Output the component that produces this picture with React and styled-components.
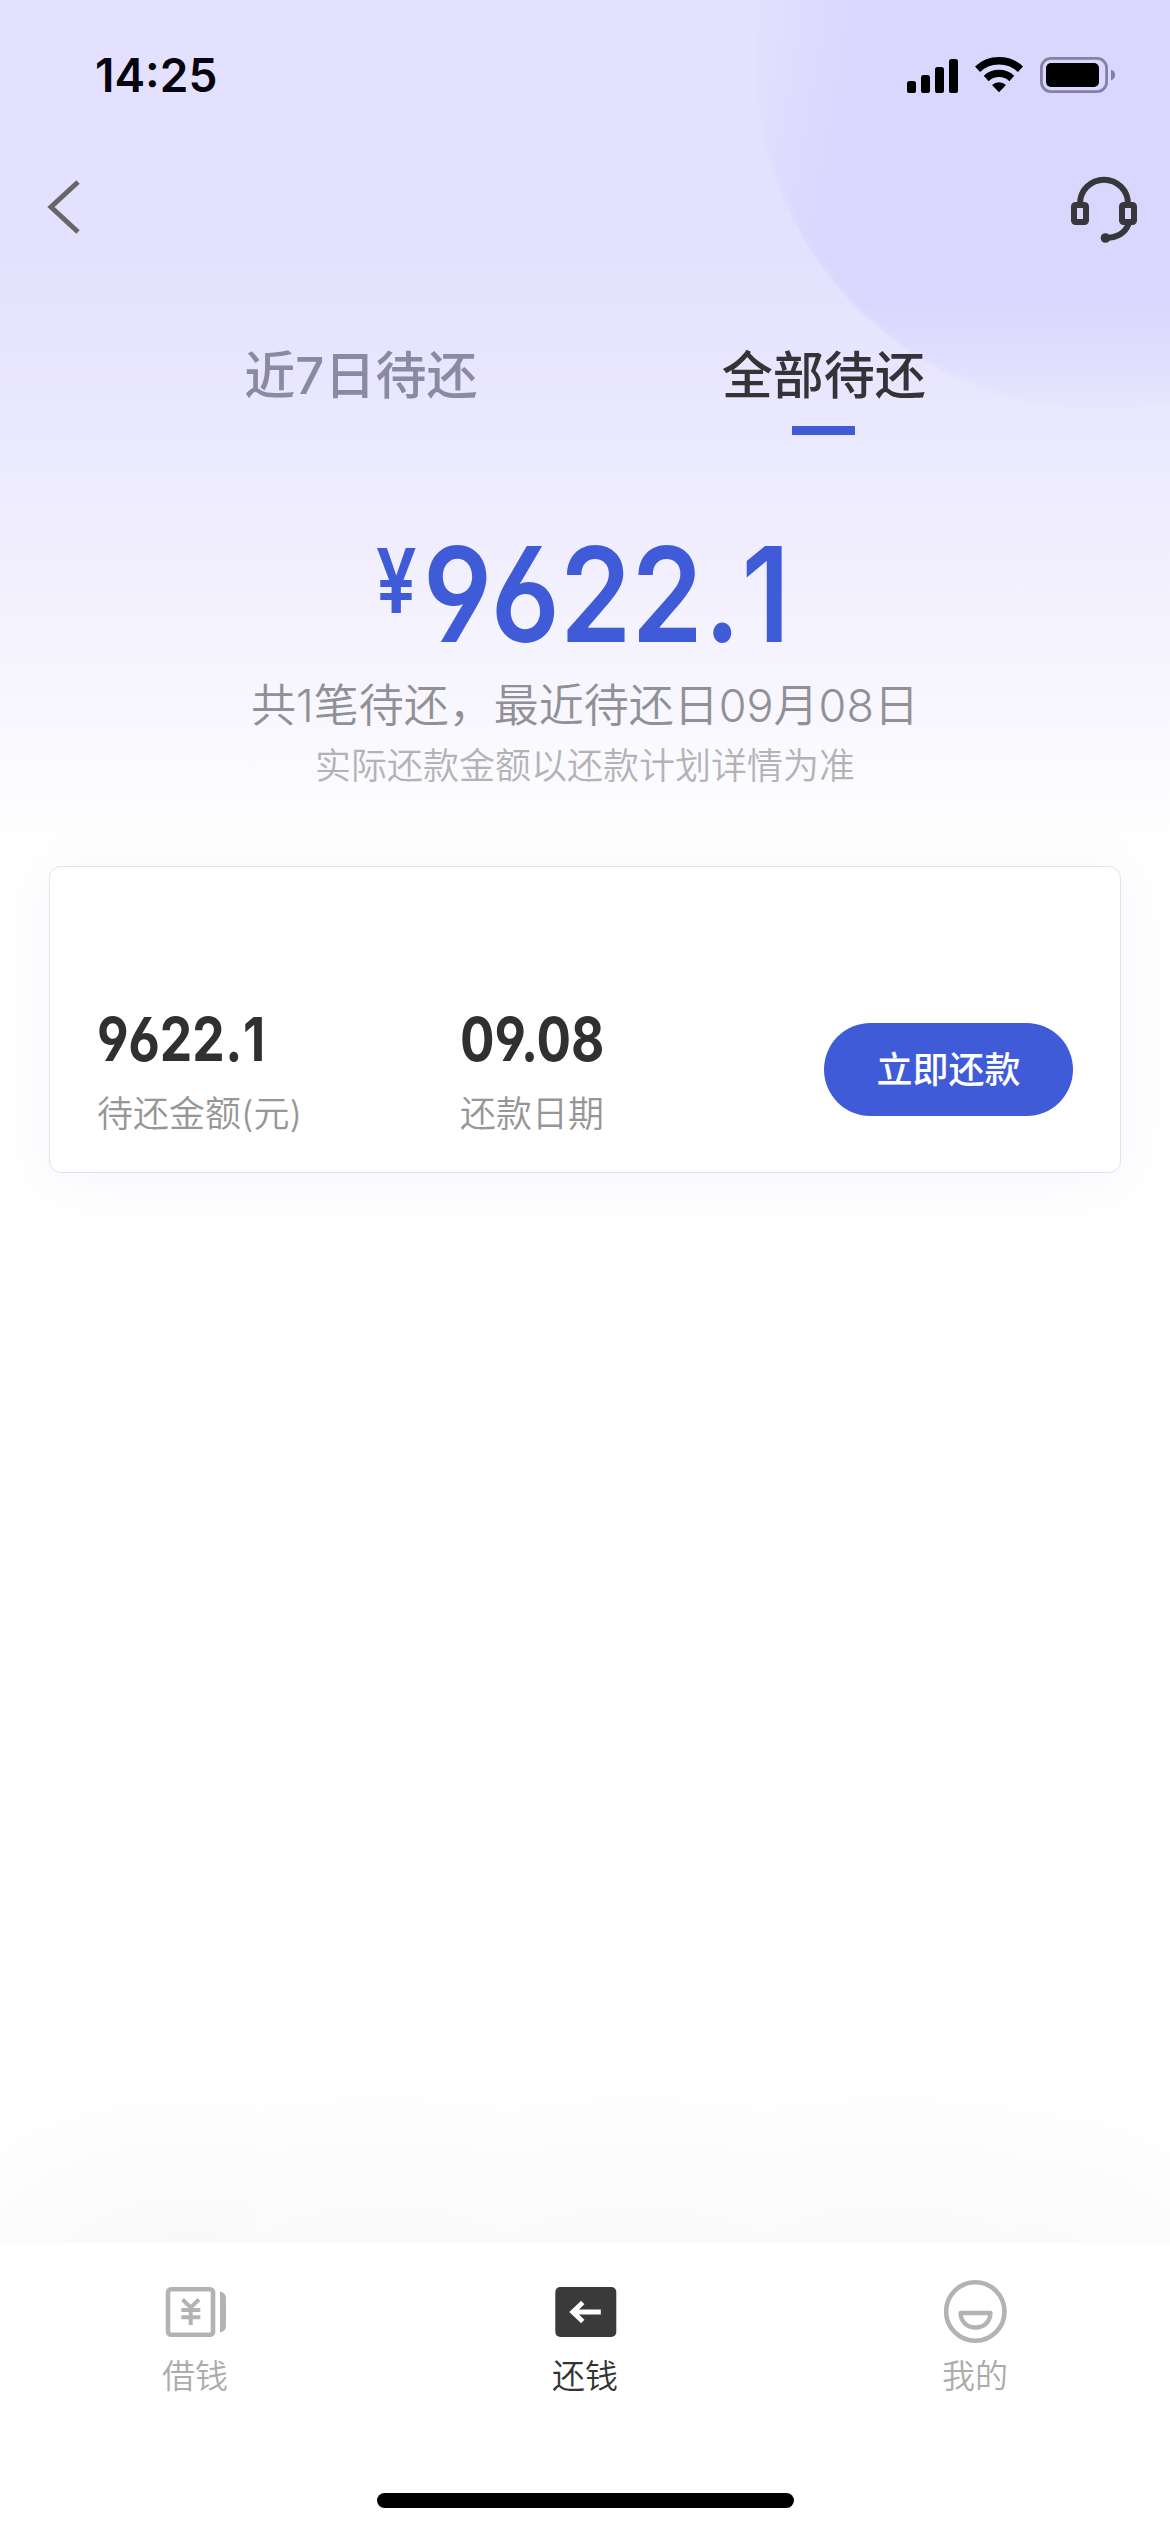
import React, { useState } from "react";
import styled, { createGlobalStyle } from "styled-components";

const GlobalStyle = createGlobalStyle`
  * {
    box-sizing: border-box;
  }
  body {
    margin: 0;
    background: #fff;
    font-family: "Inter", "Noto Sans CJK SC", sans-serif;
  }
`;

const Page = styled.div`
  position: relative;
  display: flex;
  flex-direction: column;
  width: 1170px;
  height: 2532px;
  overflow: hidden;
  background: linear-gradient(
    #e4e1fe 0,
    #e4e1fe 250px,
    #ebe9fe 440px,
    #f0eefe 540px,
    #f6f5fe 670px,
    #ffffff 850px
  );
`;

const Glow = styled.div`
  position: absolute;
  left: 756px;
  top: -282px;
  width: 692px;
  height: 692px;
  border-radius: 50%;
  background: #dad7fe;
  filter: blur(3px);
  mask-image: linear-gradient(100deg, transparent 5%, #000 19%),
    linear-gradient(#000 85%, transparent 101%);
  mask-composite: intersect;
`;

const StatusBar = styled.div`
  position: relative;
  display: flex;
  align-items: center;
  justify-content: space-between;
  height: 149px;
  padding: 0 54px 0 95px;
`;

const Time = styled.span`
  font-size: 46px;
  font-weight: 600;
  line-height: 56px;
  color: #05040f;
`;

const StatusIcons = styled.div`
  display: flex;
  align-items: center;
  gap: 17px;
`;

const NavBar = styled.div`
  position: relative;
  display: flex;
  align-items: center;
  justify-content: space-between;
  height: 116px;
  padding: 0 30px 0 46px;
`;

const Tabs = styled.div`
  position: relative;
  display: flex;
  justify-content: space-evenly;
  margin-top: 80px;
`;

const Tab = styled.div`
  display: flex;
  flex-direction: column;
  align-items: center;
  gap: 20px;
  height: 90px;
  font-size: 51px;
  font-weight: 500;
  line-height: 61px;
  color: ${(p) => (p.$active ? "#333338" : "#8c8aa3")};
`;

const TabLine = styled.div`
  width: 63px;
  height: 9px;
  background: #415bd4;
`;

const Summary = styled.div`
  display: flex;
  flex-direction: column;
  align-items: center;
`;

const Amount = styled.div`
  display: flex;
  width: 418px;
  height: 100px;
  margin-top: 109px;
  color: #3f5bd8;
`;

// narrow numerals with straight-legged 6 and 9
const Num = styled.span`
  display: block;
  flex: none;
  width: ${(p) => p.$width}px;
  height: ${(p) => p.$line}px;
  font-size: ${(p) => p.$size}px;
  line-height: ${(p) => p.$line}px;
  font-weight: ${(p) => p.$weight || 600};
  font-feature-settings: "ss01";
  white-space: nowrap;
  transform: scaleX(${(p) => p.$scale});
  transform-origin: left center;
`;

const Dot = styled.span`
  margin: 0 0.01em;
`;

const SummaryText = styled.div`
  margin-top: 32px;
  font-size: 45px;
  font-weight: 350;
  line-height: 60px;
  color: #919096;
`;

const SummaryHint = styled.div`
  margin-top: 5px;
  font-size: 36px;
  font-weight: 350;
  line-height: 50px;
  color: #b3b3b7;
`;

const Card = styled.div`
  display: flex;
  height: 307px;
  margin: 75px 49px 0;
  padding: 147px 47px 0;
  border: 1px solid #e2e2e8;
  border-radius: 12px;
  background: #fff;
  box-shadow: 0 6px 60px rgba(80, 90, 200, 0.06);
`;

const Field = styled.div`
  display: flex;
  flex-direction: column;
  gap: 25px;
  width: ${(p) => p.$width}px;
  color: #303030;
`;

const FieldLabel = styled.span`
  font-size: 36px;
  font-weight: 350;
  line-height: 50px;
  color: #969696;
`;

const PayButton = styled.button`
  width: 249px;
  height: 93px;
  margin: 9px 0 0 auto;
  padding: 0;
  border: none;
  border-radius: 47px;
  background: #3f5bd8;
  color: #fff;
  font-family: inherit;
  font-size: 36px;
  font-weight: 500;
  line-height: 50px;
`;

const TabBar = styled.div`
  display: flex;
  flex-direction: column;
  align-items: center;
  justify-content: space-between;
  height: 289px;
  margin-top: auto;
  padding: 33px 0 24px;
  background: #fff;
  box-shadow: 0 0 270px rgba(0, 0, 0, 0.065);
`;

const TabBarRow = styled.div`
  display: grid;
  grid-template-columns: repeat(3, 1fr);
  width: 100%;
`;

const TabBarItem = styled.div`
  display: flex;
  flex-direction: column;
  align-items: center;
  gap: 8px;
  font-size: 33px;
  font-weight: 350;
  line-height: 40px;
  color: ${(p) => (p.$active ? "#333333" : "#acacac")};
`;

const HomeIndicator = styled.div`
  width: 417px;
  height: 15px;
  border-radius: 8px;
  background: #000;
`;

const SignalIcon = () => (
  <svg width="51" height="36" viewBox="0 0 51 36">
    <rect x="0" y="24" width="9" height="12" rx="2.6" />
    <rect x="14" y="18" width="9" height="18" rx="2.6" />
    <rect x="28" y="10" width="9" height="26" rx="2.6" />
    <rect x="42" y="2" width="9" height="34" rx="2.6" />
  </svg>
);

const WifiIcon = () => (
  <svg width="48" height="37" viewBox="0 0 48 37">
    <g fill="none" stroke="#000">
      <path d="M2.5 13.3A31.5 31.5 0 0 1 45.5 13.3" strokeWidth="7.6" />
      <path d="M11.2 22.5A18.8 18.8 0 0 1 36.8 22.5" strokeWidth="7.2" />
    </g>
    <path d="M24 36.3L17 29A10.3 10.3 0 0 1 31 29Z" />
  </svg>
);

const BatteryIcon = () => (
  <svg width="76" height="36" viewBox="0 0 76 36">
    <rect
      x="1.4"
      y="1.4"
      width="65.2"
      height="33.2"
      rx="9.5"
      fill="none"
      stroke="#8680a4"
      strokeWidth="2.8"
    />
    <rect x="6" y="6" width="53" height="24" rx="5" />
    <path d="M71 12.5C76.5 14.5 76.5 21.5 71 23.5Z" fill="#8680a4" />
  </svg>
);

const BackIcon = () => (
  <svg width="36" height="56" viewBox="0 0 36 56" fill="none">
    <path d="M32 3L5 28L32 53" stroke="#666668" strokeWidth="5" />
  </svg>
);

const HeadsetIcon = () => (
  <svg width="72" height="72" viewBox="0 0 72 72" fill="none">
    <g stroke="#37363b" strokeWidth="6">
      <path d="M12 34V32.7A24 24 0 0 1 60 32.7V34" />
      <rect x="6" y="34" width="12" height="17" rx="1.5" />
      <rect x="54" y="34" width="12" height="17" rx="1.5" />
      <path d="M60.5 53C57.5 61 50 66.5 38 67" />
    </g>
    <circle cx="37.5" cy="67" r="4.8" fill="#37363b" />
  </svg>
);

const BorrowIcon = () => (
  <svg width="72" height="72" viewBox="-1 0 72 72" fill="none">
    <rect
      x="8"
      y="13.3"
      width="45"
      height="45.4"
      rx="3"
      stroke="#b3b3b3"
      strokeWidth="4.6"
    />
    <path d="M60 15.5Q66 17 66 22V50Q66 55 60 56.5Z" fill="#b3b3b3" />
    <path
      d="M22.5 23.5L30.7 31.5L39 23.5M21.3 34H40.3M21.3 41.3H40.3M30.7 31V49"
      stroke="#b3b3b3"
      strokeWidth="4"
    />
  </svg>
);

const RepayIcon = () => (
  <svg width="72" height="72" viewBox="-0.8 0 72 72" fill="none">
    <rect x="5.5" y="11" width="61" height="50" rx="5" fill="#3a3a3a" />
    <path
      d="M51 36H23M33 26.5L23 36L33 45.5"
      stroke="#fff"
      strokeWidth="4.8"
    />
  </svg>
);

const MineIcon = () => (
  <svg width="72" height="72" viewBox="0 0 72 72" fill="none">
    <g stroke="#b3b3b3">
      <circle cx="36.3" cy="35.5" r="29.2" strokeWidth="4.6" />
      <path
        d="M21.5 37H51.5C51 46 45 51.5 36.5 51.5S22 46 21.5 37Z"
        strokeWidth="4.4"
        strokeLinejoin="round"
      />
    </g>
  </svg>
);

const tabs = ["近7日待还", "全部待还"];

const menus = [
  { name: "借钱", icon: BorrowIcon },
  { name: "还钱", icon: RepayIcon },
  { name: "我的", icon: MineIcon },
];

const App = () => {
  const [tab, setTab] = useState(1);
  const [menu, setMenu] = useState(1);

  return (
    <Page>
      <GlobalStyle />
      <Glow />

      <StatusBar>
        <Time>14:25</Time>
        <StatusIcons>
          <SignalIcon />
          <WifiIcon />
          <BatteryIcon />
        </StatusIcons>
      </StatusBar>

      <NavBar>
        <BackIcon />
        <HeadsetIcon />
      </NavBar>

      <Tabs>
        {tabs.map((name, index) => (
          <Tab key={name} $active={tab === index} onClick={() => setTab(index)}>
            {name}
            {tab === index && <TabLine />}
          </Tab>
        ))}
      </Tabs>

      <Summary>
        <Amount>
          <Num $size={89} $line={74} $width={47} $scale={0.81}>
            ¥
          </Num>
          <Num $size={132} $line={100} $width={360} $scale={0.868} $weight={630}>
            9622<Dot>.</Dot>1
          </Num>
        </Amount>
        <SummaryText>共1笔待还，最近待还日09月08日</SummaryText>
        <SummaryHint>实际还款金额以还款计划详情为准</SummaryHint>
      </Summary>

      <Card>
        <Field $width={363}>
          <Num $size={61} $line={50} $width={180} $scale={0.845} $weight={660}>
            9622<Dot>.</Dot>1
          </Num>
          <FieldLabel>待还金额(元)</FieldLabel>
        </Field>
        <Field $width={200}>
          <Num $size={61} $line={50} $width={180} $scale={0.84} $weight={660}>
            09.08
          </Num>
          <FieldLabel>还款日期</FieldLabel>
        </Field>
        <PayButton>立即还款</PayButton>
      </Card>

      <TabBar>
        <TabBarRow>
          {menus.map(({ name, icon: Icon }, index) => (
            <TabBarItem
              key={name}
              $active={menu === index}
              onClick={() => setMenu(index)}
            >
              <Icon />
              {name}
            </TabBarItem>
          ))}
        </TabBarRow>
        <HomeIndicator />
      </TabBar>
    </Page>
  );
};

export default App;
